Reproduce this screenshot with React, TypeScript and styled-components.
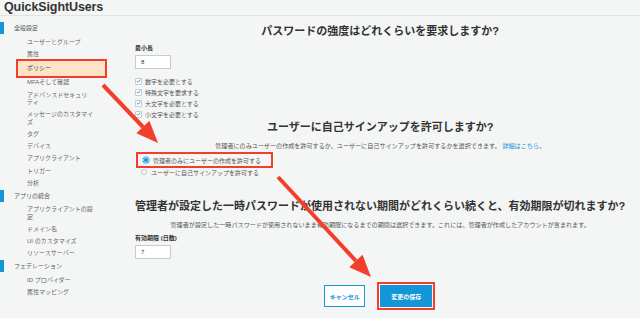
import styled, { createGlobalStyle } from "styled-components";

const RED = "#f23f2b";
const BLUE = "#1296d6";
const FONT = `"Liberation Sans", "Noto Sans CJK JP", sans-serif`;

const GlobalStyle = createGlobalStyle`
  html, body {
    margin: 0;
    padding: 0;
    background: #f4f5f5;
    font-family: ${FONT};
    color: #4a4a4a;
  }
`;

const Page = styled.div`
  position: relative;
  width: 640px;
  height: 318px;
  overflow: hidden;
  background: #f4f5f5;
`;

const Header = styled.div`
  height: 15px;
  border-bottom: 1px solid #e2e4e4;
  padding-left: 4px;
`;

const Brand = styled.div`
  font-size: 12.5px;
  line-height: 15px;
  font-weight: bold;
  color: #333;
  letter-spacing: -0.1px;
`;

const Body = styled.div`
  display: flex;
`;

const Sidebar = styled.nav`
  width: 130px;
  flex-shrink: 0;
  padding-top: 6px;
  font-size: 6px;
  line-break: strict;
`;

const SectionTitle = styled.div`
  position: relative;
  height: 12px;
  line-height: 12px;
  padding-left: 14px;
  margin-bottom: 2.5px;
  color: #555;
  &::before {
    content: "";
    position: absolute;
    left: 0;
    top: 0;
    width: 4px;
    height: 12px;
    background: ${BLUE};
  }
`;

const NavItem = styled.div<{ $active?: boolean }>`
  width: 67px;
  line-height: 7.5px;
  padding: 2.35px 0 2.35px 27px;
  color: #666;
  ${(p) =>
    p.$active &&
    `
    width: 62px;
    margin: -1.8px 0 -1.4px 16px;
    padding: 3.95px 16px 3.95px 9px;
    border: 2px solid ${RED};
    background: #fde4c8;
    color: #444;
  `}
`;

const Main = styled.main`
  flex: 1;
  padding: 0 21px 0 5px;
`;

const Title = styled.h2<{ $top: number }>`
  margin: ${(p) => p.$top}px 0 0;
  font-size: 11px;
  line-height: 14px;
  font-weight: bold;
  color: #333;
  text-align: center;
  white-space: nowrap;
`;

const Description = styled.p`
  margin: 8px 0 0;
  font-size: 6.1px;
  line-height: 8px;
  color: #555;
  text-align: center;
  white-space: nowrap;
`;

const Link = styled.a`
  color: ${BLUE};
  text-decoration: none;
`;

const FieldLabel = styled.div<{ $top: number }>`
  margin-top: ${(p) => p.$top}px;
  font-size: 6px;
  line-height: 8px;
  font-weight: bold;
  color: #333;
`;

const Input = styled.div`
  box-sizing: border-box;
  width: 36px;
  height: 14px;
  margin-top: 3px;
  padding-left: 5px;
  background: #fff;
  border: 1px solid #c9cccc;
  font-size: 6px;
  line-height: 12px;
  color: #333;
`;

const CheckList = styled.div`
  margin-top: 6.5px;
`;

const CheckRow = styled.label`
  display: flex;
  align-items: center;
  gap: 3px;
  height: 11px;
  font-size: 6px;
  color: #555;
`;

const Box = styled.span`
  box-sizing: border-box;
  width: 7px;
  height: 7px;
  background: #fff;
  border: 1px solid #c7cbcd;
  border-radius: 1px;
  display: flex;
  align-items: center;
  justify-content: center;
`;

const RadioList = styled.div`
  margin-top: 2px;
`;

const RadioRow = styled.label<{ $highlight?: boolean }>`
  display: flex;
  align-items: center;
  gap: 4px;
  box-sizing: border-box;
  font-size: 6px;
  color: #555;
  height: ${(p) => (p.$highlight ? 16 : 8)}px;
  ${(p) =>
    p.$highlight
      ? `
    width: 137px;
    margin-left: 1px;
    padding-left: 5px;
    border: 2px solid ${RED};
  `
      : `
    padding-left: 6px;
  `}
`;

const RadioDot = styled.span<{ $on?: boolean }>`
  box-sizing: border-box;
  width: 6px;
  height: 6px;
  border-radius: 50%;
  background: ${(p) => (p.$on ? BLUE : "#fff")};
  border: ${(p) => (p.$on ? `1.3px solid #bfe3f5` : "1px solid #bfc3c5")};
  box-shadow: ${(p) => (p.$on ? `0 0 0 0.5px ${BLUE}` : "none")};
`;

const ButtonRow = styled.div`
  display: flex;
  justify-content: center;
  gap: 15px;
  margin-top: 26px;
  padding-right: 4px;
`;

const Button = styled.button<{ $primary?: boolean }>`
  box-sizing: border-box;
  height: 22px;
  padding: 0;
  width: ${(p) => (p.$primary ? 52 : 41)}px;
  font-family: ${FONT};
  font-size: 6px;
  font-weight: bold;
  border: 1px solid ${BLUE};
  background: ${(p) => (p.$primary ? BLUE : "#fff")};
  color: ${(p) => (p.$primary ? "#fff" : BLUE)};
  outline: ${(p) => (p.$primary ? `2.5px solid ${RED}` : "none")};
  outline-offset: 1.5px;
`;

const ArrowLayer = styled.svg`
  position: absolute;
  left: 0;
  top: 0;
  width: 640px;
  height: 318px;
  pointer-events: none;
`;

// word joiner keeps the small ィ attached to テ when the line wraps
const general = [
  "ユーザーとグループ",
  "属性",
  "ポリシー",
  "MFAそして確認",
  "アドバンスドセキュリテ\u2060ィ",
  "メッセージのカスタマイズ",
  "タグ",
  "デバイス",
  "アプリクライアント",
  "トリガー",
  "分析",
];
const integration = ["アプリクライアントの設定", "ドメイン名", "UI のカスタマイズ", "リソースサーバー"];
const federation = ["ID プロバイダー", "属性マッピング"];
const checks = ["数字を必要とする", "特殊文字を要求する", "大文字を必要とする", "小文字を必要とする"];

function Check() {
  return (
    <Box>
      <svg width="6" height="6" viewBox="0 0 10 10">
        <path d="M1.5 5.2 L4 7.6 L8.8 2.2" fill="none" stroke={BLUE} strokeWidth="1.8" />
      </svg>
    </Box>
  );
}

export default function App() {
  return (
    <Page lang="ja">
      <GlobalStyle />
      <Header>
        <Brand>QuickSightUsers</Brand>
      </Header>
      <Body>
        <Sidebar>
          <SectionTitle>全般設定</SectionTitle>
          {general.map((t) => (
            <NavItem key={t} $active={t === "ポリシー"}>
              {t}
            </NavItem>
          ))}
          <SectionTitle>アプリの統合</SectionTitle>
          {integration.map((t) => (
            <NavItem key={t}>{t}</NavItem>
          ))}
          <SectionTitle>フェデレーション</SectionTitle>
          {federation.map((t) => (
            <NavItem key={t}>{t}</NavItem>
          ))}
        </Sidebar>
        <Main>
          <Title $top={8}>パスワードの強度はどれくらいを要求しますか?</Title>
          <FieldLabel $top={6}>最小長</FieldLabel>
          <Input>8</Input>
          <CheckList>
            {checks.map((c) => (
              <CheckRow key={c}>
                <Check />
                {c}
              </CheckRow>
            ))}
          </CheckList>

          <Title $top={0.5}>ユーザーに自己サインアップを許可しますか?</Title>
          <Description>
            管理者にのみユーザーの作成を許可するか、ユーザーに自己サインアップを許可するかを選択できます。{" "}
            <Link>詳細はこちら。</Link>
          </Description>
          <RadioList>
            <RadioRow $highlight>
              <RadioDot $on />
              管理者のみにユーザーの作成を許可する
            </RadioRow>
            <RadioRow>
              <RadioDot />
              ユーザーに自己サインアップを許可する
            </RadioRow>
          </RadioList>

          <Title $top={23}>
            管理者が設定した一時パスワードが使用されない期間がどれくらい続くと、有効期限が切れますか?
          </Title>
          <Description>
            管理者が設定した一時パスワードが使用されないまま有効期限になるまでの期間は選択できます。これには、管理者が作成したアカウントが含まれます。
          </Description>
          <FieldLabel $top={5}>有効期限 (日数)</FieldLabel>
          <Input>7</Input>

          <ButtonRow>
            <Button>キャンセル</Button>
            <Button $primary>変更の保存</Button>
          </ButtonRow>
        </Main>
      </Body>
      <ArrowLayer viewBox="0 0 640 318">
        <line x1="103" y1="85" x2="143" y2="127" stroke={RED} strokeWidth="4" />
        <polygon points="158,143 136.4,133.2 149.4,120.8" fill={RED} />
        <line x1="278" y1="177" x2="356" y2="261" stroke={RED} strokeWidth="4" />
        <polygon points="371,277 349.3,267.2 362.5,254.8" fill={RED} />
      </ArrowLayer>
    </Page>
  );
}
